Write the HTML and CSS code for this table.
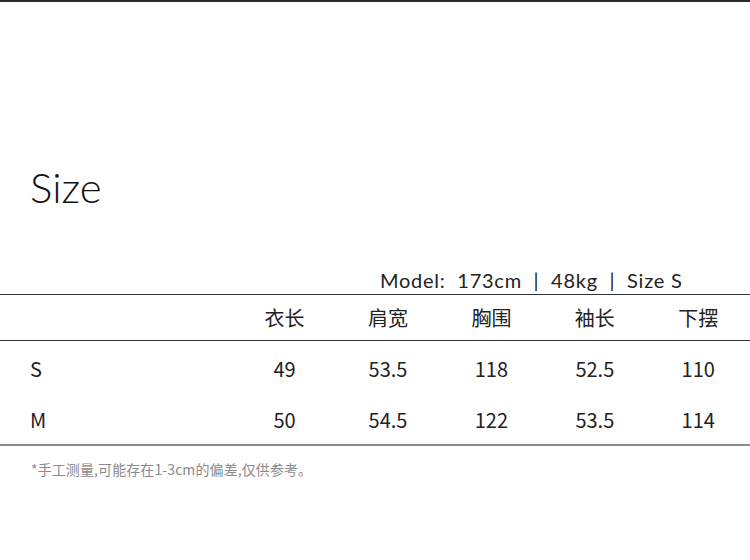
FILE: index.html
```html
<!DOCTYPE html>
<html>
<head>
<meta charset="utf-8">
<link rel="stylesheet" href="styles.css">
</head>
<body>
<div class="page">
  <h1 class="title">Size</h1>
  <div class="model">Model:&nbsp; 173cm &nbsp;|&nbsp; 48kg &nbsp;|&nbsp; Size S</div>
  <div class="table">
    <div class="row head">
      <div class="label"></div>
      <div class="cell">衣长</div>
      <div class="cell">肩宽</div>
      <div class="cell">胸围</div>
      <div class="cell">袖长</div>
      <div class="cell">下摆</div>
    </div>
    <div class="row data first">
      <div class="label">S</div>
      <div class="cell">49</div>
      <div class="cell">53.5</div>
      <div class="cell">118</div>
      <div class="cell">52.5</div>
      <div class="cell">110</div>
    </div>
    <div class="row data">
      <div class="label">M</div>
      <div class="cell">50</div>
      <div class="cell">54.5</div>
      <div class="cell">122</div>
      <div class="cell">53.5</div>
      <div class="cell">114</div>
    </div>
  </div>
  <p class="note">*手工测量,可能存在1-3cm的偏差,仅供参考。</p>
</div>
</body>
</html>
```
FILE: styles.css
```css
html, body {
  margin: 0;
  padding: 0;
  background: #fff;
}
body {
  width: 750px;
  height: 560px;
  overflow: hidden;
  font-family: Lato, "Noto Sans CJK SC", sans-serif;
  color: #1a1a1a;
}
.page {
  border-top: 2px solid #2a2a2a;
}
.title {
  margin: 0;
  padding: 160px 0 0 30px;
  height: 50px;
  font-size: 42px;
  font-weight: 300;
  line-height: 50px;
  color: #111;
}
.model {
  margin-top: 55px;
  padding-left: 380px;
  height: 27px;
  font-size: 20px;
  line-height: 26px;
  font-weight: 400;
  color: #222;
  letter-spacing: 0.75px;
}
.table {
  border-top: 1px solid #333;
}
.row {
  display: flex;
  align-items: center;
}
.head {
  height: 45px;
  border-bottom: 1px solid #333;
  font-family: "Noto Sans CJK SC", sans-serif;
  font-size: 20px;
  color: #222;
}
.data {
  height: 51px;
  font-family: "Noto Sans CJK SC", sans-serif;
  font-size: 20px;
  color: #222;
}
.data.first {
  height: 54px;
}
.table .row:last-child {
  height: 49px;
  border-bottom: 2px solid #8c8c8c;
}
.label {
  width: 233px;
  padding-left: 30px;
  box-sizing: border-box;
}
.cell {
  width: 103.5px;
  text-align: center;
}
.note {
  margin: 13px 0 0 31px;
  font-family: "Noto Sans CJK SC", sans-serif;
  font-size: 14px;
  color: #8a8a8a;
  letter-spacing: 0.1px;
}
```
